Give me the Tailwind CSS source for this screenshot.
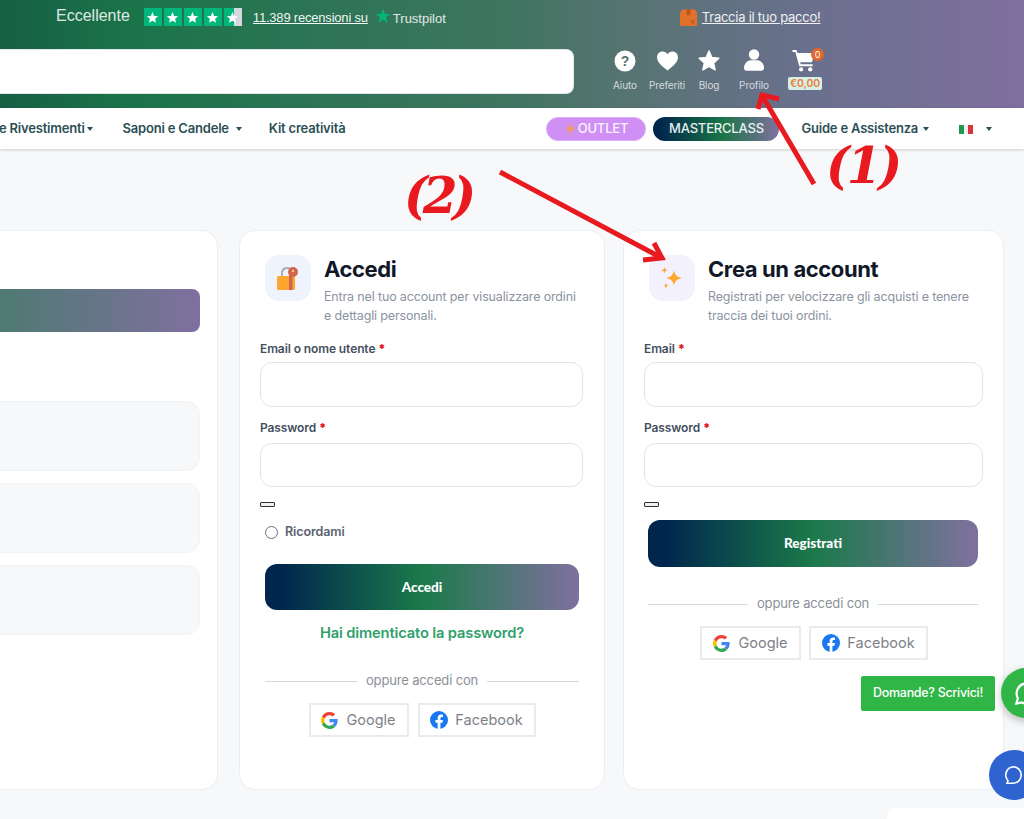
<!doctype html>
<html lang="it"><head><meta charset="utf-8"><title>Accedi</title>
<script src="https://cdn.jsdelivr.net/npm/@tailwindcss/browser@4"></script></head>
<body class="m-0">
<div class="relative w-[1024px] h-[819px] overflow-hidden bg-[#f7f8fa] font-['Inter',sans-serif]">
  <header class="h-[108px] bg-[linear-gradient(90deg,#175f45_0%,#1b7449_13%,#3f7561_50%,#557470_60%,#69708c_78%,#7f6f9e_100%)] text-white">
    <div class="h-[49px] flex items-start">
      <span class="ml-[56px] mt-[7px] text-[16px] leading-[18px] text-white/85 font-['Liberation_Sans',sans-serif]">Eccellente</span>
      <div class="ml-[14px] mt-[8px] flex gap-[2px]">
        <span class="w-[18px] h-[18px] bg-[#00b67a] flex items-center justify-center"><svg viewBox="0 0 24 24" class="w-[13px] h-[13px]" fill="#fff"><path d="M12 2l3 7 7.500.6-5.700 4.900 1.800 7.300L12 18l-6.600 3.800 1.800-7.300L1.500 9.600 9 9z"/></svg></span>
        <span class="w-[18px] h-[18px] bg-[#00b67a] flex items-center justify-center"><svg viewBox="0 0 24 24" class="w-[13px] h-[13px]" fill="#fff"><path d="M12 2l3 7 7.500.6-5.700 4.900 1.800 7.300L12 18l-6.600 3.800 1.800-7.300L1.500 9.600 9 9z"/></svg></span>
        <span class="w-[18px] h-[18px] bg-[#00b67a] flex items-center justify-center"><svg viewBox="0 0 24 24" class="w-[13px] h-[13px]" fill="#fff"><path d="M12 2l3 7 7.500.6-5.700 4.900 1.800 7.300L12 18l-6.600 3.800 1.800-7.300L1.500 9.600 9 9z"/></svg></span>
        <span class="w-[18px] h-[18px] bg-[#00b67a] flex items-center justify-center"><svg viewBox="0 0 24 24" class="w-[13px] h-[13px]" fill="#fff"><path d="M12 2l3 7 7.500.6-5.700 4.900 1.800 7.300L12 18l-6.600 3.800 1.800-7.300L1.500 9.600 9 9z"/></svg></span>
        <span class="w-[18px] h-[18px] bg-[linear-gradient(90deg,#00b67a_55%,#d6d8e0_55%)] flex items-center justify-center"><svg viewBox="0 0 24 24" class="w-[13px] h-[13px]" fill="#fff"><path d="M12 2l3 7 7.500.6-5.700 4.900 1.800 7.300L12 18l-6.600 3.800 1.800-7.300L1.500 9.600 9 9z"/></svg></span>
      </div>
      <a class="ml-[11px] mt-[10px] text-[13px] leading-[16px] underline tracking-[-0.2px] text-white/95 font-['Liberation_Sans',sans-serif]">11.389 recensioni su</a>
      <svg viewBox="0 0 24 24" class="ml-[7px] mt-[8px] w-[16px] h-[16px]" fill="#00b67a"><path d="M12 1l3.100 8H23l-6.500 5 2.500 8.500L12 17.300 5 22.500 7.500 14 1 9h7.900z"/></svg>
      <span class="ml-[2px] mt-[11px] text-[13px] leading-[15px] font-medium text-white/85 font-['Liberation_Sans',sans-serif]">Trustpilot</span>
      <svg viewBox="0 0 20 20" class="ml-[233px] mt-[8px] w-[19px] h-[19px]"><path fill="#e0702a" d="M3 1.500h14l2 4v12a1.500 1.500 0 0 1-1.500 1.500h-15A1.500 1.500 0 0 1 1 17.500v-12z"/><path fill="#b9541a" d="M8 1.500h4v6H8z"/><circle cx="14.500" cy="14.500" r="2.200" fill="#c25f22"/></svg>
      <a class="ml-[4px] mt-[9px] text-[13px] leading-[17px] underline tracking-[-0.25px] text-white/90">Traccia il tuo pacco!</a>
    </div>
    <div class="flex items-start">
      <div class="w-[574px] h-[45px] bg-white rounded-r-lg border border-l-0 border-[#e3e6ea]"></div>
      <div class="relative flex items-start text-[10px] leading-[12px] tracking-[-0.1px] text-white/75">
        <div class="ml-[39px] w-[24px] flex flex-col items-center">
          <svg viewBox="0 0 22 22" class="mt-[1px] w-[22px] h-[22px]"><circle cx="11" cy="11" r="10.500" fill="#fff"/><text x="11" y="16" text-anchor="middle" font-size="14" font-weight="800" fill="#55756f" font-family="Liberation Sans">?</text></svg>
          <span class="mt-[7px]">Aiuto</span>
        </div>
        <div class="ml-[14px] w-[32px] flex flex-col items-center">
          <svg viewBox="0 0 24 22" class="mt-[2px] w-[23px] h-[20px]" fill="#fff"><path d="M12 21.500C5 16 .5 12 .5 6.800.5 3 3.300.5 6.500.5c2.300 0 4.300 1.100 5.500 3 1.200-1.900 3.200-3 5.500-3 3.200 0 6 2.500 6 6.300C23.500 12 19 16 12 21.500z"/></svg>
          <span class="mt-[8px] whitespace-nowrap">Preferiti</span>
        </div>
        <div class="ml-[14px] w-[24px] flex flex-col items-center">
          <svg viewBox="0 0 24 24" class="w-[24px] h-[23px]" fill="#fff" stroke="#fff" stroke-width="1.500" stroke-linejoin="round"><path d="M12 2l3 6.800 7.300.8-5.500 4.900 1.600 7.300L12 18.100l-6.400 3.700 1.600-7.300L1.700 9.600 9 8.800z"/></svg>
          <span class="mt-[7px]">Blog</span>
        </div>
        <div class="ml-[20px] w-[26px] flex flex-col items-center">
          <svg viewBox="0 0 20 22" class="w-[20px] h-[22px]" fill="#fff"><circle cx="10" cy="5.500" r="5.200"/><path d="M0 19c0-5 4-7.800 6.500-7.800h7c2.500 0 6.500 2.800 6.500 7.800 0 1.700-1 2.700-2.500 2.700h-15C1 21.700 0 20.700 0 19z"/></svg>
          <span class="mt-[8px]">Profilo</span>
        </div>
        <div class="relative ml-[21px] w-[34px] flex flex-col items-center">
          <svg viewBox="0 0 24 24" class="-ml-[2px] w-[24px] h-[23px]" fill="#fff"><path d="M0 1h4.200l1 3.200H23l-2.700 9.600H8l.6 2.200H21v2H7L3 3H0z"/><circle cx="9" cy="21.300" r="2.200"/><circle cx="18.500" cy="21.300" r="2.200"/></svg>
          <span class="absolute left-[23px] -top-[1px] w-[13px] h-[13px] rounded-full bg-[#e2672a] text-white text-[9px] leading-[13px] text-center">0</span>
          <span class="mt-[5px] w-[34px] h-[13px] rounded-[2px] bg-[#d5f0e8] text-[#ef7f3b] text-[10.500px] leading-[13px] font-semibold text-center">€0,00</span>
        </div>
      </div>
    </div>
  </header>
  <nav class="h-[41px] pt-[1px] bg-white shadow-[0_1px_3px_rgba(0,0,0,0.18)] flex items-center text-[13px] font-semibold text-[#2c4f55] tracking-[-0.2px] relative">
    <span class="-ml-[1px] whitespace-nowrap">e Rivestimenti</span>
    <span class="ml-[2px] w-0 h-0 border-x-[3.500px] border-x-transparent border-t-[4px] border-t-[#2c4f55]"></span>
    <span class="ml-[30px] whitespace-nowrap">Saponi e Candele</span>
    <span class="ml-[7px] w-0 h-0 border-x-[3.500px] border-x-transparent border-t-[4px] border-t-[#2c4f55]"></span>
    <span class="ml-[27px] whitespace-nowrap">Kit creatività</span>
    <span class="ml-[201px] w-[100px] h-[24px] rounded-full bg-[#cf8ff5] border border-[#dcb0f8] flex items-center justify-center gap-[2px] text-white/90 text-[13px] font-medium">
      <svg viewBox="0 0 12 16" class="w-[11px] h-[14px]" fill="#ee9a6d"><path d="M7.500 0L0 9h5l-1.500 7L12 6H6.500z"/></svg>OUTLET</span>
    <span class="ml-[7px] w-[126px] h-[24px] rounded-full bg-[linear-gradient(90deg,#00264d_5%,#1a7548_55%,#80709f_100%)] flex items-center justify-center text-white/90 text-[13px] font-medium">MASTERCLASS</span>
    <span class="ml-[22px] whitespace-nowrap">Guide e Assistenza</span>
    <span class="ml-[5px] w-0 h-0 border-x-[3.500px] border-x-transparent border-t-[4px] border-t-[#2c4f55]"></span>
    <span class="ml-[30px] w-[14px] h-[9px] flex"><i class="flex-1 bg-[#1f9a4c]"></i><i class="flex-1 bg-[#f2f2f2]"></i><i class="flex-1 bg-[#d9343b]"></i></span>
    <span class="ml-[13px] w-0 h-0 border-x-[3.500px] border-x-transparent border-t-[4px] border-t-[#2c4f55]"></span>
  </nav>

  <main class="mt-[81px] flex items-start">
    <section class="w-[218px] h-[560px] bg-white border border-l-0 border-[#eceef2] rounded-r-[16px] pt-[58px]">
      <div class="w-[200px] h-[43px] rounded-r-lg bg-[linear-gradient(90deg,#4e7a72_0%,#80709f_100%)]"></div>
      <div class="mt-[69px] flex flex-col gap-[12px]">
        <div class="w-[200px] h-[70px] rounded-r-[14px] bg-[#f7f8fa] border border-l-0 border-[#f2f3f5]"></div>
        <div class="w-[200px] h-[70px] rounded-r-[14px] bg-[#f7f8fa] border border-l-0 border-[#f2f3f5]"></div>
        <div class="w-[200px] h-[70px] rounded-r-[14px] bg-[#f7f8fa] border border-l-0 border-[#f2f3f5]"></div>
      </div>
    </section>

    <section class="ml-[21px] w-[366px] h-[560px] bg-white border border-[#eceef2] rounded-[16px] pl-[20px] pr-[20px] pt-[24px]">
      <div class="flex pl-[5px]">
        <div class="w-[46px] h-[46px] rounded-[14px] bg-[#eef3fe] flex items-center justify-center shrink-0">
          <svg viewBox="0 0 24 24" class="w-[24px] h-[24px]"><path d="M6 11V7a5 5 0 0 1 9-3" fill="none" stroke="#a9afb5" stroke-width="2"/><rect x="1" y="10" width="18" height="14" rx="1.500" fill="#ffa62e"/><rect x="13" y="9" width="3.500" height="15" fill="#d0674a"/><circle cx="17" cy="6" r="5" fill="#d0674a"/><circle cx="17" cy="5" r="1.200" fill="#f6c9a6"/></svg>
        </div>
        <div class="ml-[13px]">
          <h2 class="h-[28px] text-[22px] leading-[28px] font-bold text-[#101828] tracking-[-0.4px]">Accedi</h2>
          <p class="mt-[4px] text-[12.500px] leading-[19px] text-[#8b93a0] tracking-[-0.15px]">Entra nel tuo account per visualizzare ordini<br>e dettagli personali.</p>
        </div>
      </div>
      <label class="block mt-[17px] h-[14px] text-[12px] leading-[14px] font-semibold text-[#454f5e] tracking-[-0.1px]">Email o nome utente <b class="text-[#e5141c]">*</b></label>
      <input type="text" class="block mt-[6px] w-[323px] h-[45px] rounded-[12px] border border-[#e2e4ea] bg-white">
      <label class="block mt-[14px] h-[14px] text-[12px] leading-[14px] font-semibold text-[#454f5e] tracking-[-0.1px]">Password <b class="text-[#e5141c]">*</b></label>
      <input type="password" class="block mt-[8px] w-[323px] h-[44px] rounded-[12px] border border-[#e2e4ea] bg-white">
      <div class="mt-[15px] w-[15px] h-[5px] border border-[#2d3038] rounded-[1px] bg-[#f0f0f0]"></div>
      <label class="mt-[18px] ml-[5px] h-[14px] flex items-center gap-[7px] text-[12.500px] font-semibold text-[#5a6270] tracking-[-0.1px]">
        <span class="w-[13px] h-[13px] rounded-full border-[1.500px] border-[#6b7280] bg-white"></span>Ricordami</label>
      <button class="mt-[25px] ml-[5px] block w-[314px] h-[46px] rounded-[12px] bg-[linear-gradient(90deg,#00264d_5%,#1b7a4a_50%,#80709f_100%)] text-white text-[13.500px] font-black font-['Lato',sans-serif]">Accedi</button>
      <a class="mt-[13px] ml-[5px] w-[314px] h-[20px] flex items-center justify-center text-[14.700px] font-semibold text-[#2f9f6c] tracking-[-0.15px]">Hai dimenticato la password?</a>
      <div class="mt-[28px] ml-[5px] w-[314px] h-[20px] flex items-center gap-[9px] text-[13px] text-[#8b8f97] tracking-[-0.15px]">
        <i class="flex-1 h-px bg-[#d6d8dc]"></i><span class="whitespace-nowrap">oppure accedi con</span><i class="flex-1 h-px bg-[#d6d8dc]"></i>
      </div>
      <div class="mt-[12px] flex justify-center gap-[9px]">
        <a class="w-[100px] h-[34px] border-2 border-[#eaeaea] flex items-center justify-center gap-[8px] text-[14.500px] text-[#7d8187]">
          <svg viewBox="0 0 48 48" class="w-[17px] h-[17px]"><path fill="#EA4335" d="M24 9.500c3.500 0 6.700 1.300 9.100 3.500l6.800-6.800C35.800 2.400 30.300 0 24 0 14.600 0 6.500 5.400 2.600 13.200l7.900 6.200C12.400 13.600 17.700 9.500 24 9.500z"/><path fill="#4285F4" d="M47 24.500c0-1.600-.1-3.100-.4-4.500H24v9h12.900c-.6 3-2.200 5.500-4.700 7.200l7.300 5.700C43.800 37.900 47 31.800 47 24.500z"/><path fill="#FBBC05" d="M10.500 28.600c-.5-1.400-.8-3-.8-4.600s.3-3.200.8-4.600l-7.900-6.200C.9 16.500 0 20.100 0 24s.9 7.500 2.600 10.800z"/><path fill="#34A853" d="M24 48c6.500 0 11.900-2.100 15.900-5.800l-7.700-6c-2.100 1.400-4.900 2.300-8.200 2.300-6.300 0-11.600-4.100-13.500-9.900l-7.900 6.200C6.500 42.600 14.600 48 24 48z"/></svg>Google</a>
        <a class="w-[118px] h-[34px] border-2 border-[#eaeaea] flex items-center justify-center gap-[7px] text-[14.500px] text-[#7d8187]">
          <svg viewBox="0 0 24 24" class="w-[18px] h-[18px]"><circle cx="12" cy="12" r="12" fill="#1877f2"/><path fill="#fff" d="M16.700 15.500l.5-3.500h-3.300V9.800c0-1 .5-1.900 2-1.900h1.500v-3s-1.400-.2-2.700-.2c-2.700 0-4.500 1.700-4.500 4.600V12h-3v3.500h3V24h3.700v-8.500z"/></svg>Facebook</a>
      </div>
    </section>

    <section class="ml-[18px] w-[381px] h-[560px] bg-white border border-[#eceef2] rounded-[16px] pl-[20px] pr-[19px] pt-[24px]">
      <div class="flex pl-[5px]">
        <div class="w-[46px] h-[46px] rounded-[14px] bg-[#f3f1fe] flex items-center justify-center shrink-0">
          <svg viewBox="0 0 24 24" class="w-[24px] h-[24px]" fill="#ffa62e"><path d="M14 4c.8 4.800 3 7.200 8 8-5 .8-7.200 3.200-8 8-.8-4.800-3-7.200-8-8 5-.8 7.200-3.200 8-8z"/><path d="M4.500 1c.4 2 1.100 2.800 3 3.200-1.900.4-2.600 1.200-3 3.200-.4-2-1.100-2.800-3-3.200 1.900-.4 2.600-1.200 3-3.200zM6 17c.3 1.700 1 2.400 2.500 2.700C7 20 6.300 20.700 6 22.500c-.3-1.800-1-2.500-2.500-2.800C5 19.400 5.700 18.700 6 17z"/></svg>
        </div>
        <div class="ml-[13px]">
          <h2 class="h-[28px] text-[22px] leading-[28px] font-bold text-[#101828] tracking-[-0.4px]">Crea un account</h2>
          <p class="mt-[4px] text-[12.500px] leading-[19px] text-[#8b93a0] tracking-[-0.15px]">Registrati per velocizzare gli acquisti e tenere<br>traccia dei tuoi ordini.</p>
        </div>
      </div>
      <label class="block mt-[17px] h-[14px] text-[12px] leading-[14px] font-semibold text-[#454f5e] tracking-[-0.1px]">Email <b class="text-[#e5141c]">*</b></label>
      <input type="email" class="block mt-[6px] w-[339px] h-[45px] rounded-[12px] border border-[#e2e4ea] bg-white">
      <label class="block mt-[14px] h-[14px] text-[12px] leading-[14px] font-semibold text-[#454f5e] tracking-[-0.1px]">Password <b class="text-[#e5141c]">*</b></label>
      <input type="password" class="block mt-[8px] w-[339px] h-[44px] rounded-[12px] border border-[#e2e4ea] bg-white">
      <div class="mt-[15px] w-[15px] h-[5px] border border-[#2d3038] rounded-[1px] bg-[#f0f0f0]"></div>
      <button class="mt-[13px] ml-[4px] block w-[330px] h-[47px] rounded-[12px] bg-[linear-gradient(90deg,#00264d_5%,#1b7a4a_50%,#80709f_100%)] text-white text-[13.500px] font-black font-['Lato',sans-serif]">Registrati</button>
      <div class="mt-[27px] ml-[4px] w-[330px] h-[20px] flex items-center gap-[9px] text-[13px] text-[#8b8f97] tracking-[-0.15px]">
        <i class="flex-1 h-px bg-[#d6d8dc]"></i><span class="whitespace-nowrap">oppure accedi con</span><i class="flex-1 h-px bg-[#d6d8dc]"></i>
      </div>
      <div class="mt-[12px] flex gap-[8px] pl-[56px]">
        <a class="w-[101px] h-[34px] border-2 border-[#eaeaea] flex items-center justify-center gap-[8px] text-[14.500px] text-[#7d8187]">
          <svg viewBox="0 0 48 48" class="w-[17px] h-[17px]"><path fill="#EA4335" d="M24 9.500c3.500 0 6.700 1.300 9.100 3.500l6.800-6.800C35.800 2.400 30.300 0 24 0 14.600 0 6.500 5.400 2.600 13.200l7.900 6.200C12.400 13.600 17.700 9.500 24 9.500z"/><path fill="#4285F4" d="M47 24.500c0-1.600-.1-3.100-.4-4.500H24v9h12.900c-.6 3-2.200 5.500-4.700 7.200l7.300 5.700C43.800 37.900 47 31.800 47 24.500z"/><path fill="#FBBC05" d="M10.500 28.600c-.5-1.400-.8-3-.8-4.600s.3-3.200.8-4.600l-7.900-6.200C.9 16.500 0 20.100 0 24s.9 7.500 2.600 10.800z"/><path fill="#34A853" d="M24 48c6.500 0 11.900-2.100 15.900-5.800l-7.700-6c-2.100 1.400-4.900 2.300-8.200 2.300-6.300 0-11.600-4.100-13.500-9.900l-7.900 6.200C6.500 42.600 14.600 48 24 48z"/></svg>Google</a>
        <a class="w-[119px] h-[34px] border-2 border-[#eaeaea] flex items-center justify-center gap-[7px] text-[14.500px] text-[#7d8187]">
          <svg viewBox="0 0 24 24" class="w-[18px] h-[18px]"><circle cx="12" cy="12" r="12" fill="#1877f2"/><path fill="#fff" d="M16.700 15.500l.5-3.500h-3.300V9.800c0-1 .5-1.900 2-1.900h1.500v-3s-1.400-.2-2.700-.2c-2.700 0-4.500 1.700-4.500 4.600V12h-3v3.500h3V24h3.700v-8.500z"/></svg>Facebook</a>
      </div>
    </section>
  </main>

  <a class="absolute left-[861px] top-[676px] w-[134px] h-[35px] rounded-[2px] bg-[#2fb646] text-white text-[12.500px] font-medium tracking-[-0.3px] flex items-center justify-center">Domande? Scrivici!</a>
  <div class="absolute left-[1001px] top-[668px] w-[50px] h-[50px] rounded-full bg-[#2fb646] shadow-[0_3px_8px_rgba(0,0,0,0.25)]">
    <svg viewBox="0 0 24 24" class="ml-[12px] mt-[12px] w-[27px] h-[27px]" fill="none" stroke="#fff" stroke-width="2"><path d="M3 21l1.300-4.800A9 9 0 1 1 8 19.900z"/></svg>
  </div>
  <div class="absolute left-[989px] top-[750px] w-[50px] h-[50px] rounded-full bg-[#2f63d0]">
    <svg viewBox="0 0 24 24" class="ml-[13px] mt-[14px] w-[22px] h-[22px]" fill="none" stroke="#fff" stroke-width="1.800"><path d="M12 3a9 9 0 0 1 0 18H5.500l1-3A9 9 0 0 1 12 3z"/></svg>
  </div>
  <div class="absolute left-[887px] top-[808px] w-[140px] h-[40px] rounded-[8px] bg-white"></div>

  <svg class="absolute inset-0 pointer-events-none" width="1024" height="819" viewBox="0 0 1024 819" fill="none" stroke="#e8191f" stroke-width="5" stroke-linejoin="miter">
    <path d="M814 184L763 97"/><path d="M758 109L762 95L779 99"/>
    <path d="M500 172L660 257"/><path d="M654 243L662 258L643 260"/>
  </svg>
  <span class="absolute left-[826px] top-[136px] text-[50px] leading-[60px] font-bold italic text-[#e8191f] font-['DejaVu_Serif',serif] whitespace-nowrap tracking-[-3px]">(1)</span>
  <span class="absolute left-[404px] top-[166px] text-[50px] leading-[60px] font-bold italic text-[#e8191f] font-['DejaVu_Serif',serif] whitespace-nowrap tracking-[-5px]">(2)</span>
</div>
</body></html>
